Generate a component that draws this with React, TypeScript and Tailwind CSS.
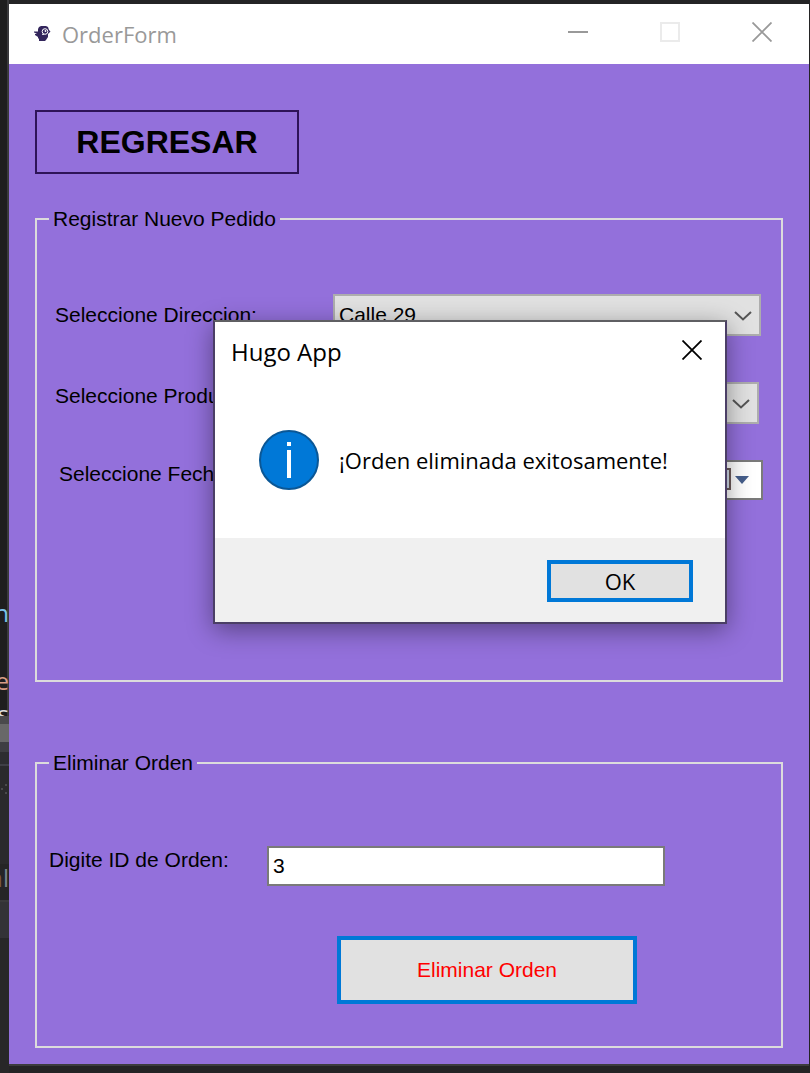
import React, { useState } from "react";

function BirdLogo() {
  return (
    <svg viewBox="0 0 18 18" className="h-[18px] w-[18px]" aria-hidden="true">
      <path
        fill="#33265c"
        d="M5 5V4l1-2 2-1h5l2 1 1 3 1.500 1.500L16 8l-1 1v3l-2 3-1 1H6v-2l-1-1v-1L2 10V9l2-.5-3-1V6.500h4z"
      />
      <circle cx="12" cy="6.500" r="2.800" fill="none" stroke="#ffffff" strokeWidth="1" />
      <circle cx="12.500" cy="6" r="0.900" fill="#ffffff" />
      <path d="M9 9.500h2" stroke="#ffffff" strokeWidth="0.800" />
    </svg>
  );
}

function CrossIcon() {
  return (
    <svg viewBox="0 0 20 20" className="h-5 w-5" aria-hidden="true">
      <path d="M0.5 0.5l19 19M19.5 0.5l-19 19" stroke="currentColor" strokeWidth="1.8" fill="none" />
    </svg>
  );
}

function Chevron() {
  return (
    <svg viewBox="0 0 18 10" className="pointer-events-none absolute right-[9px] top-[17px] h-[10px] w-[18px]" aria-hidden="true">
      <path d="M1 1l8 7.5L17 1" stroke="#555555" strokeWidth="2" fill="none" />
    </svg>
  );
}

function Combo({ id, options }: { id: string; options: string[] }) {
  return (
    <div className="relative flex-1">
      <select
        id={id}
        className="block h-[42px] w-full appearance-none rounded-none border-2 border-[#adadad] bg-[#e1e1e1] pl-1 pr-10 outline-none"
      >
        {options.map((o) => (
          <option key={o}>{o}</option>
        ))}
      </select>
      <Chevron />
    </div>
  );
}

function EditorEdge() {
  return (
    <div
      className="w-[9px] shrink-0 overflow-hidden bg-[linear-gradient(to_right,#1e1e1e_7px,#3a3a3c_7px)] font-['Open_Sans','Noto_Sans',sans-serif] text-2xl leading-7"
      aria-hidden="true"
    >
      <div className="flex flex-col items-end">
        <div className="mt-[599px] h-7 text-[#7cc4ea]">n</div>
        <div className="mt-10 h-7 text-[#d69d85]">e</div>
        <div className="mt-[5px] h-4 overflow-hidden text-[#dcdcdc]">s</div>
        <div className="h-2 w-full bg-[#4a4a4c]" />
        <div className="h-[18px] w-full bg-[#686868]" />
        <div className="h-[10px] w-full bg-[#3e3e42]" />
        <div className="h-3 w-full bg-[#2d2d30]" />
        <div className="h-0.5 w-full bg-[#3f3f46]" />
        <div className="flex h-[98px] w-full flex-col items-start bg-[#2a2a2c] pt-[18px]">
          <svg viewBox="0 0 7 10" className="h-[10px] w-[7px]">
            <path d="M1 4h2v2H1zM5 0h2v2H5zM5 8h2v2H5z" fill="#4a4a4c" />
          </svg>
        </div>
        <div className="flex h-9 w-full justify-end bg-[#252526] text-[#77838a]">
          <span className="text-[#7a5a3c]">a</span>l
        </div>
        <div className="h-0.5 w-full bg-[#3a3a3c]" />
        <div className="h-9 w-full bg-[#333337]" />
        <div className="h-[135px] w-full bg-[#272728]" />
      </div>
    </div>
  );
}

export default function App() {
  const [open, setOpen] = useState(true);
  const [orderId, setOrderId] = useState("3");

  return (
    <div className="flex min-h-screen bg-[#242425] font-['Liberation_Sans',Arial,sans-serif] text-[21px] leading-7 text-black">
      <EditorEdge />
      <div className="relative flex min-w-0 flex-1 flex-col border-t-4 border-r border-[#242425]">
        <header className="flex h-[60px] items-center bg-white pl-6 font-['Open_Sans','Noto_Sans',sans-serif] text-[#999999]">
          <BirdLogo />
          <h1 className="ml-[11px] flex-1 text-[22px]">OrderForm</h1>
          <div className="flex items-center gap-[72px] pb-1 pr-[37px]">
            <button aria-label="Minimizar" className="flex h-5 w-5 items-center">
              <span className="h-0.5 w-5 bg-[#999999]" />
            </button>
            <button aria-label="Maximizar" className="h-5 w-5 border-2 border-[#ebebeb]" />
            <button aria-label="Cerrar" className="h-5 w-5">
              <CrossIcon />
            </button>
          </div>
        </header>

        <main className="bg-[#9370db] px-[26px] pb-4 pt-[46px]">
          <button className="block h-16 w-[264px] border-2 border-[#2e1458] text-[32px] font-bold">REGRESAR</button>

          <fieldset className="mt-[31px] min-h-[477px] border-2 border-[#dcdcdc] pt-[61px]">
            <legend className="ml-3 px-1">Registrar Nuevo Pedido</legend>
            <div className="flex items-center pl-[18px] pr-5">
              <label htmlFor="direccion" className="w-[278px]">Seleccione Direccion:</label>
              <Combo id="direccion" options={["Calle 29"]} />
            </div>
            <div className="mt-[46px] flex items-start pl-[18px] pr-[22px]">
              <label htmlFor="producto" className="w-[278px]">Seleccione Producto:</label>
              <Combo id="producto" options={[""]} />
            </div>
            <div className="mt-9 flex items-start pl-[22px] pr-[18px]">
              <label htmlFor="fecha" className="w-[274px]">Seleccione Fecha:</label>
              <div className="relative flex-1">
                <input id="fecha" type="text" className="block h-10 w-full border-2 border-[#7a7a7a] bg-white px-1 outline-none" />
                <svg viewBox="0 0 56 24" className="pointer-events-none absolute right-[14px] top-2 h-6 w-14" aria-hidden="true">
                  <path d="M18 1h19v20H18z" fill="#d5dfee" stroke="#6b5a5a" strokeWidth="2" />
                  <path d="M42 8h14l-7 8z" fill="#465f8c" />
                </svg>
              </div>
            </div>
          </fieldset>

          <fieldset className="mt-[67px] min-h-[299px] border-2 border-[#dcdcdc] pt-[69px]">
            <legend className="ml-3 px-1">Eliminar Orden</legend>
            <div className="flex items-start pl-3 pr-[116px]">
              <label htmlFor="orden" className="w-[218px]">Digite ID de Orden:</label>
              <input
                id="orden"
                type="text"
                value={orderId}
                onChange={(e) => setOrderId(e.target.value)}
                className="block h-10 min-w-0 flex-1 border-2 border-[#7a7a7a] bg-white px-1 outline-none"
              />
            </div>
            <button
              onClick={() => setOpen(true)}
              className="ml-[300px] mt-[50px] block h-[68px] w-[300px] border-4 border-[#0078d7] bg-[#e1e1e1] text-[#ff0000]"
            >
              Eliminar Orden
            </button>
          </fieldset>
        </main>
        <div className="h-0.5 bg-[#3c3c3e]" />

        {open && (
          <div
            role="dialog"
            aria-labelledby="dialog-title"
            className="absolute left-[204px] top-[316px] flex w-[514px] flex-col border-2 border-[#4b3f66] border-t-[#5f5f63] bg-white font-['Open_Sans','Noto_Sans',sans-serif] text-[22px] shadow-[0_6px_24px_rgba(0,0,0,0.4)]"
          >
            <div className="flex h-[60px] items-center justify-between pl-4 pr-[23px]">
              <h2 id="dialog-title" className="text-2xl">Hugo App</h2>
              <div className="pb-1">
                <button aria-label="Cerrar mensaje" onClick={() => setOpen(false)} className="block h-5 w-5">
                  <CrossIcon />
                </button>
              </div>
            </div>
            <div className="flex h-[156px] items-center gap-5 pl-11">
              <svg viewBox="0 0 60 60" className="h-[60px] w-[60px]" aria-hidden="true">
                <circle cx="30" cy="30" r="29" fill="#0078d7" stroke="#0a5796" strokeWidth="2" />
                <path d="M28 12h4v4h-4zM28 20h4v28h-4z" fill="#ffffff" />
              </svg>
              <p>¡Orden eliminada exitosamente!</p>
            </div>
            <div className="flex h-[84px] items-start justify-end bg-[#f0f0f0] pr-8 pt-[22px]">
              <button onClick={() => setOpen(false)} className="h-[42px] w-[146px] border-4 border-[#0078d7] bg-[#e1e1e1]">
                OK
              </button>
            </div>
          </div>
        )}
      </div>
    </div>
  );
}
